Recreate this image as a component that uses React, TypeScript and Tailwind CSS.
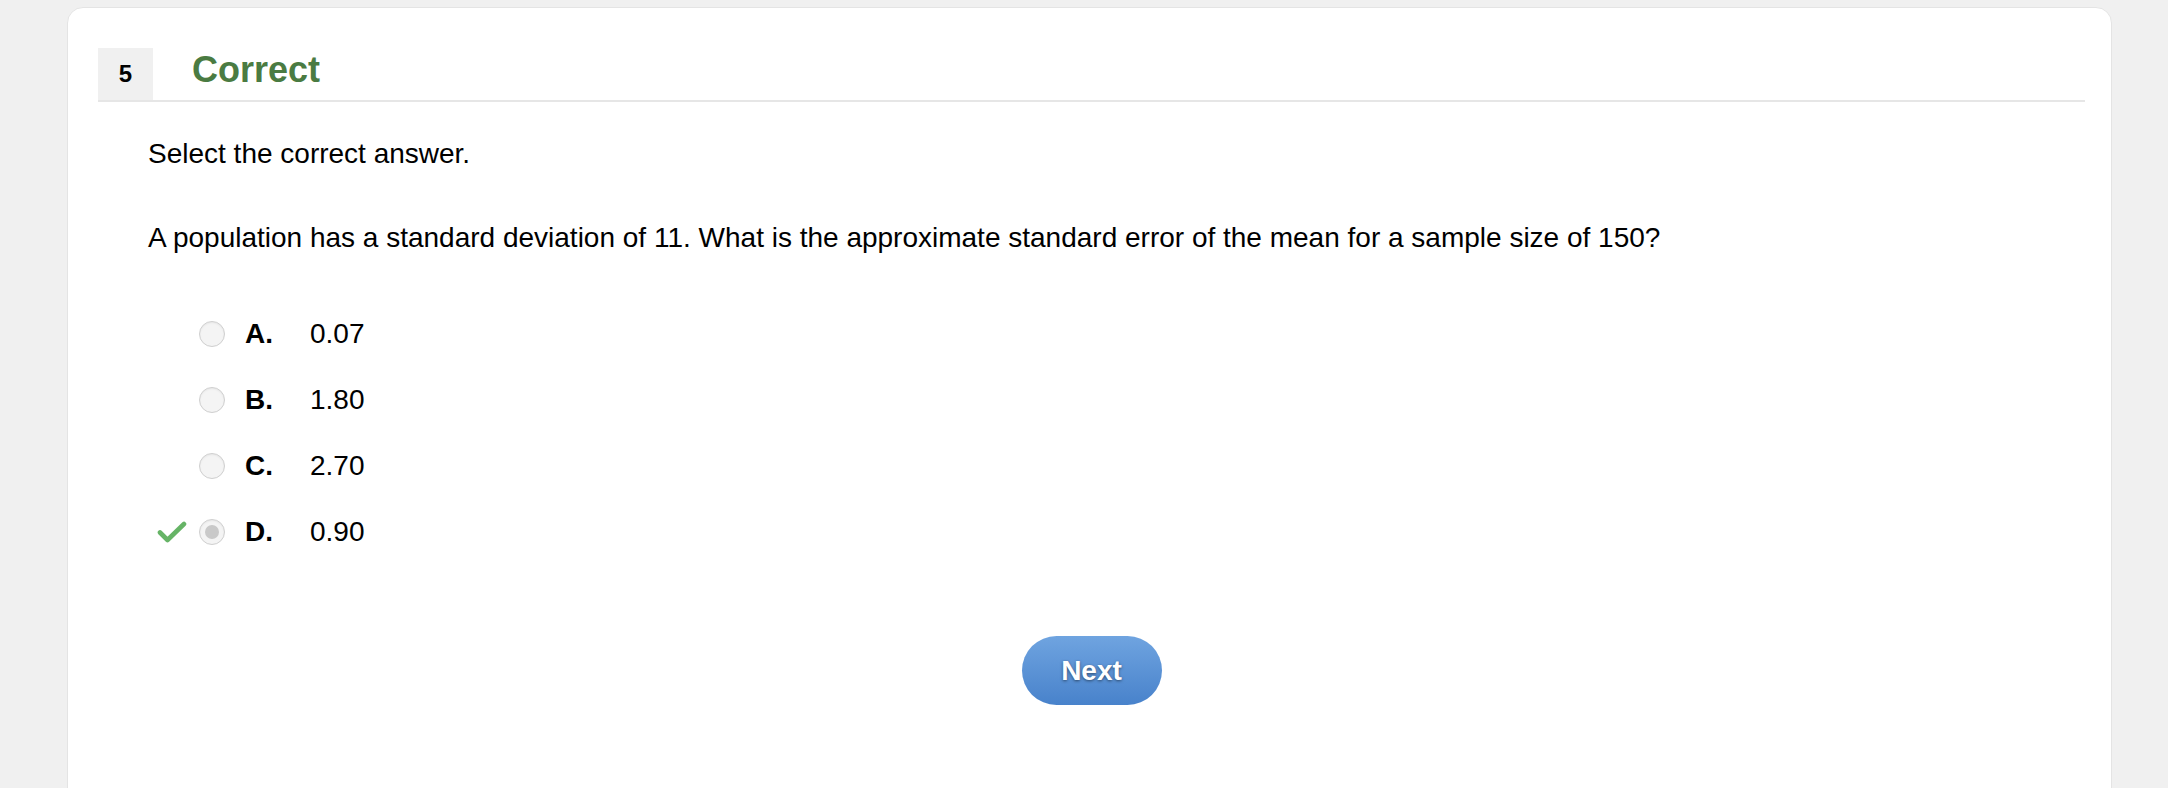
const OPTIONS = [
  { letter: "A.", value: "0.07" },
  { letter: "B.", value: "1.80" },
  { letter: "C.", value: "2.70" },
  { letter: "D.", value: "0.90", selected: true },
];

function Radio({ selected }: { selected?: boolean }) {
  return (
    <span className="flex h-[26px] w-[26px] items-center justify-center rounded-full border-[1.5px] border-[#cfcfcf] bg-[#f4f4f4] shadow-[inset_0_1px_2px_rgba(0,0,0,0.06)]">
      {selected && <span className="h-[14px] w-[14px] rounded-full bg-[#c9c9c9]" />}
    </span>
  );
}

function Check() {
  return (
    <svg width="30" height="24" viewBox="0 0 30 24" fill="none">
      <path d="M3 12.5 L10.5 20 L27 4" stroke="#66b466" strokeWidth="4.6" strokeLinecap="round" strokeLinejoin="round" />
    </svg>
  );
}

export default function App() {
  return (
    <div className="min-h-screen bg-[#f0f0f0] pt-[7px] font-['Liberation_Sans',Arial,sans-serif] text-black">
      <div className="ml-[67px] mr-[56px] min-h-[800px] rounded-t-[16px] border-[1.5px] border-[#e4e4e4] bg-white pl-[30px] pr-[26px] pt-[40px]">
        {/* Header */}
        <div className="flex items-stretch border-b-2 border-[#e6e6e6]">
          <div className="flex h-[52px] w-[55px] items-center justify-center bg-[#f0f0f0] text-[24px] font-bold">5</div>
          <div className="ml-[39px] flex items-center pb-[8px] text-[36px] font-bold leading-none text-[#4a7b42]">Correct</div>
        </div>

        {/* Body */}
        <div className="pl-[50px]">
          <p className="mt-[36px] text-[28px] leading-[32px]">Select the correct answer.</p>
          <p className="mt-[52px] text-[28px] leading-[32px]">
            A population has a standard deviation of 11. What is the approximate standard error of the mean for a sample size of 150?
          </p>

          <div className="mt-[47px] flex flex-col">
            {OPTIONS.map((o) => (
              <div key={o.letter} className="flex h-[66px] items-center">
                <div className="flex w-[51px] items-center pl-[9px]">{o.selected && <Check />}</div>
                <Radio selected={o.selected} />
                <span className="ml-[20px] w-[65px] text-[28px] font-bold">{o.letter}</span>
                <span className="text-[28px]">{o.value}</span>
              </div>
            ))}
          </div>
        </div>

        {/* Next */}
        <div className="mt-[71px] flex justify-center">
          <button className="h-[69px] w-[140px] rounded-full bg-gradient-to-b from-[#6fa4e0] to-[#4882cb] text-[28px] font-bold text-white [text-shadow:0_1px_3px_rgba(0,0,0,0.5)]">
            Next
          </button>
        </div>
      </div>
    </div>
  );
}
